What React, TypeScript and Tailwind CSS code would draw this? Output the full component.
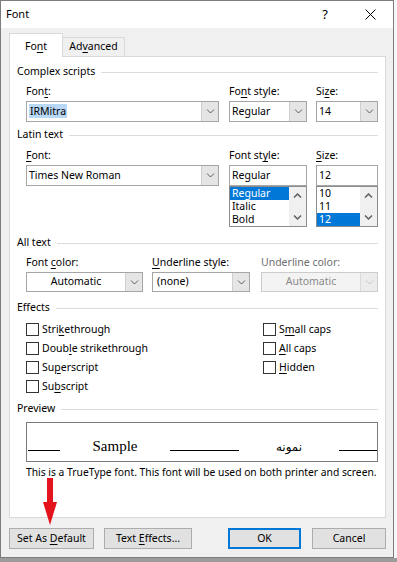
import React from "react";

const U = ({ children }: { children: React.ReactNode }) => (
  <span className="underline underline-offset-[2px] decoration-[1px]">{children}</span>
);

function Chevron({ up = false, color = "#5f5f5f", sw = 1 }: { up?: boolean; color?: string; sw?: number }) {
  return (
    <svg width="9" height="5" viewBox="0 0 9 5" className="block">
      <path d={up ? "M1 4.5L4.5 1L8 4.5" : "M1 0.5L4.5 4L8 0.5"} fill="none" stroke={color} strokeWidth={sw} />
    </svg>
  );
}

function Combo({
  className = "",
  children,
  disabled = false,
  center = false,
}: {
  className?: string;
  children: React.ReactNode;
  disabled?: boolean;
  center?: boolean;
}) {
  return (
    <div className={`flex border ${disabled ? "border-[#cccccc] bg-[#f3f3f3]" : "border-[#a6a6a6] bg-white"} ${className}`}>
      <div
        className={`flex-1 flex items-center overflow-hidden whitespace-nowrap ${center ? "justify-center" : "pl-[2px]"} ${
          disabled ? "text-[#8a8a8a]" : "text-black"
        }`}
      >
        <span>{children}</span>
      </div>
      <div
        className={`w-[17px] flex items-center justify-center border-l ${
          disabled ? "bg-[#ececec] border-[#dadada]" : "bg-[#e5e5e5] border-[#cfcfcf]"
        }`}
      >
        <Chevron color={disabled ? "#c4c4c4" : "#5f5f5f"} />
      </div>
    </div>
  );
}

function ListBox({ items, selected, className = "" }: { items: string[]; selected: number; className?: string }) {
  return (
    <div className={`flex h-[41px] border border-[#8c8c8c] bg-white ${className}`}>
      <div className="flex-1 flex flex-col">
        {items.map((it, i) => (
          <div
            key={it}
            className={`h-[13px] flex items-center pl-[2px] leading-none ${i === selected ? "bg-[#0078d7] text-white" : "text-black"}`}
          >
            {it}
          </div>
        ))}
      </div>
      <div className="w-[17px] bg-[#f0f0f0] flex flex-col justify-between items-center py-[6px]">
        <Chevron up color="#606060" sw={1.5} />
        <Chevron color="#606060" sw={1.5} />
      </div>
    </div>
  );
}

function GroupHeader({ title, className = "" }: { title: string; className?: string }) {
  return (
    <div className={`flex items-center h-[16px] pl-[7px] pr-[7px] ${className}`}>
      <span className="whitespace-nowrap">{title}</span>
      <div className="flex-1 h-px bg-[#dcdcdc] ml-[6px]" />
    </div>
  );
}

function Label({ children, className = "" }: { children: React.ReactNode; className?: string }) {
  return (
    <div className={`h-[16px] flex items-center whitespace-nowrap ${className}`}>
      <span>{children}</span>
    </div>
  );
}

function Check({ children }: { children: React.ReactNode }) {
  return (
    <div className="h-[19px] flex items-center">
      <div className="w-[13px] h-[13px] border border-[#333333] bg-white" />
      <span className="ml-[3px] whitespace-nowrap">{children}</span>
    </div>
  );
}

function Btn({ children, className = "", primary = false }: { children: React.ReactNode; className?: string; primary?: boolean }) {
  return (
    <div
      className={`h-[21px] flex items-center justify-center bg-[#e1e1e1] ${
        primary ? "border-2 border-[#0078d7]" : "border border-[#adadad]"
      } ${className}`}
    >
      <span className="whitespace-nowrap">{children}</span>
    </div>
  );
}

export default function App() {
  return (
    <div className="w-[397px] h-[562px] bg-[#f7f7f7] relative overflow-hidden font-['Noto_Sans',sans-serif] text-[10.5px] text-black flex flex-col">
      <div className="w-[394px] h-[558px] shrink-0 border border-[#7d7d7d] bg-[#f0f0f0] flex flex-col">
        {/* Title bar */}
        <div className="h-[27px] bg-white flex items-center">
          <span className="pl-[5px] text-[11px]">Font</span>
          <div className="ml-auto flex items-center">
            <span className="text-[13px] mr-[37px]">?</span>
            <svg width="11" height="11" viewBox="0 0 11 11" className="mr-[17px]">
              <path d="M0.5 0.5L10.5 10.5M10.5 0.5L0.5 10.5" stroke="#000" strokeWidth="1" />
            </svg>
          </div>
        </div>

        <div className="pl-[8px] pr-[7px] pt-[5px] flex flex-col">
          {/* Tabs */}
          <div className="flex h-[23px] items-start">
            <div className="relative z-10 w-[54px] h-[24px] bg-white border border-b-0 border-[#d9d9d9] flex items-center justify-center pt-[2px]">
              <span>
                Fo<U>n</U>t
              </span>
            </div>
            <div className="mt-[4px] w-[62px] h-[19px] bg-[#f0f0f0] border border-l-0 border-b-0 border-[#d9d9d9] flex items-center justify-center">
              <span>
                Ad<U>v</U>anced
              </span>
            </div>
          </div>

          {/* Panel */}
          <div className="h-[462px] border border-[#d9d9d9] bg-white flex flex-col">
            <GroupHeader title="Complex scripts" className="mt-[7px]" />
            <div className="flex pl-[16px] mt-[4px]">
              <div className="w-[193px]">
                <Label>
                  Fon<U>t</U>:
                </Label>
                <Combo className="mt-[1px] h-[21px] w-[193px]">
                  <span className="bg-[#b8d8f5] px-[1px]">IRMitra</span>
                </Combo>
              </div>
              <div className="w-[78px] ml-[10px]">
                <Label>
                  Fo<U>n</U>t style:
                </Label>
                <Combo className="mt-[1px] h-[21px] w-[78px]">Regular</Combo>
              </div>
              <div className="w-[62px] ml-[9px]">
                <Label>
                  Si<U>z</U>e:
                </Label>
                <Combo className="mt-[1px] h-[21px] w-[62px]">14</Combo>
              </div>
            </div>

            <GroupHeader title="Latin text" className="mt-[5px]" />
            <div className="flex pl-[16px] mt-[5px]">
              <div className="w-[193px]">
                <Label>
                  <U>F</U>ont:
                </Label>
                <Combo className="mt-[1px] h-[21px] w-[193px]">Times New Roman</Combo>
              </div>
              <div className="w-[78px] ml-[10px]">
                <Label>
                  Font st<U>y</U>le:
                </Label>
                <div className="mt-[1px] h-[21px] w-[78px] border border-[#a6a6a6] bg-white flex items-center pl-[2px]">Regular</div>
                <ListBox items={["Regular", "Italic", "Bold"]} selected={0} className="w-[78px]" />
              </div>
              <div className="w-[62px] ml-[9px]">
                <Label>
                  <U>S</U>ize:
                </Label>
                <div className="mt-[1px] h-[21px] w-[62px] border border-[#a6a6a6] bg-white flex items-center pl-[2px]">12</div>
                <ListBox items={["10", "11", "12"]} selected={2} className="w-[62px]" />
              </div>
            </div>

            <GroupHeader title="All text" className="mt-[8px]" />
            <div className="flex pl-[16px] mt-[4px]">
              <div className="w-[117px]">
                <Label>
                  Font <U>c</U>olor:
                </Label>
                <Combo className="mt-[1px] h-[20px] w-[117px]" center>
                  Automatic
                </Combo>
              </div>
              <div className="w-[98px] ml-[9px]">
                <Label>
                  <U>U</U>nderline style:
                </Label>
                <Combo className="mt-[1px] h-[20px] w-[98px]">
                  <span className="pl-[2px]">(none)</span>
                </Combo>
              </div>
              <div className="w-[117px] ml-[11px]">
                <Label className="text-[#6d6d6d]">Underline color:</Label>
                <Combo className="mt-[1px] h-[20px] w-[117px]" center disabled>
                  Automatic
                </Combo>
              </div>
            </div>

            <GroupHeader title="Effects" className="mt-[8px]" />
            <div className="flex pl-[16px] mt-[4px]">
              <div className="w-[237px] flex flex-col">
                <Check>
                  Stri<U>k</U>ethrough
                </Check>
                <Check>
                  Doub<U>l</U>e strikethrough
                </Check>
                <Check>
                  Su<U>p</U>erscript
                </Check>
                <Check>
                  Su<U>b</U>script
                </Check>
              </div>
              <div className="flex flex-col">
                <Check>
                  S<U>m</U>all caps
                </Check>
                <Check>
                  <U>A</U>ll caps
                </Check>
                <Check>
                  <U>H</U>idden
                </Check>
              </div>
            </div>

            <GroupHeader title="Preview" className="mt-[5px]" />
            <div className="ml-[16px] mt-[5px] w-[352px] h-[40px] border border-[#7a7a7a] bg-white flex items-baseline pt-[16px]">
              <div className="ml-[1px] w-[32px] h-px bg-black" />
              <div className="w-[110px] text-center font-['Liberation_Serif',serif] text-[15px] leading-none">Sample</div>
              <div className="w-[69px] h-px bg-black" />
              <div className="w-[100px] text-center font-['DejaVu_Sans',sans-serif] text-[12px] leading-none" dir="rtl">
                نمونه
              </div>
              <div className="w-[38px] h-px bg-black" />
            </div>
            <div className="ml-[16px] mt-[3px] h-[16px] flex items-center whitespace-nowrap text-[10.3px]">
              <span>This is a TrueType font. This font will be used on both printer and screen.</span>
            </div>
          </div>

          {/* Buttons */}
          <div className="flex mt-[10px]">
            <Btn className="w-[85px]">
              Set As <U>D</U>efault
            </Btn>
            <Btn className="w-[88px] ml-[10px]">
              Text <U>E</U>ffects...
            </Btn>
            <Btn className="w-[73px] ml-auto" primary>
              OK
            </Btn>
            <Btn className="w-[74px] ml-[11px]">Cancel</Btn>
          </div>
        </div>
      </div>
      <div className="flex-1 bg-[#9c9c9c]" />

      {/* Red arrow annotation */}
      <svg className="absolute left-[43px] top-[478px]" width="15" height="48" viewBox="0 0 15 48">
        <rect x="4" y="0" width="6" height="26" fill="#e3141c" />
        <polygon points="0,24 14,24 7,47" fill="#e3141c" />
      </svg>
    </div>
  );
}
